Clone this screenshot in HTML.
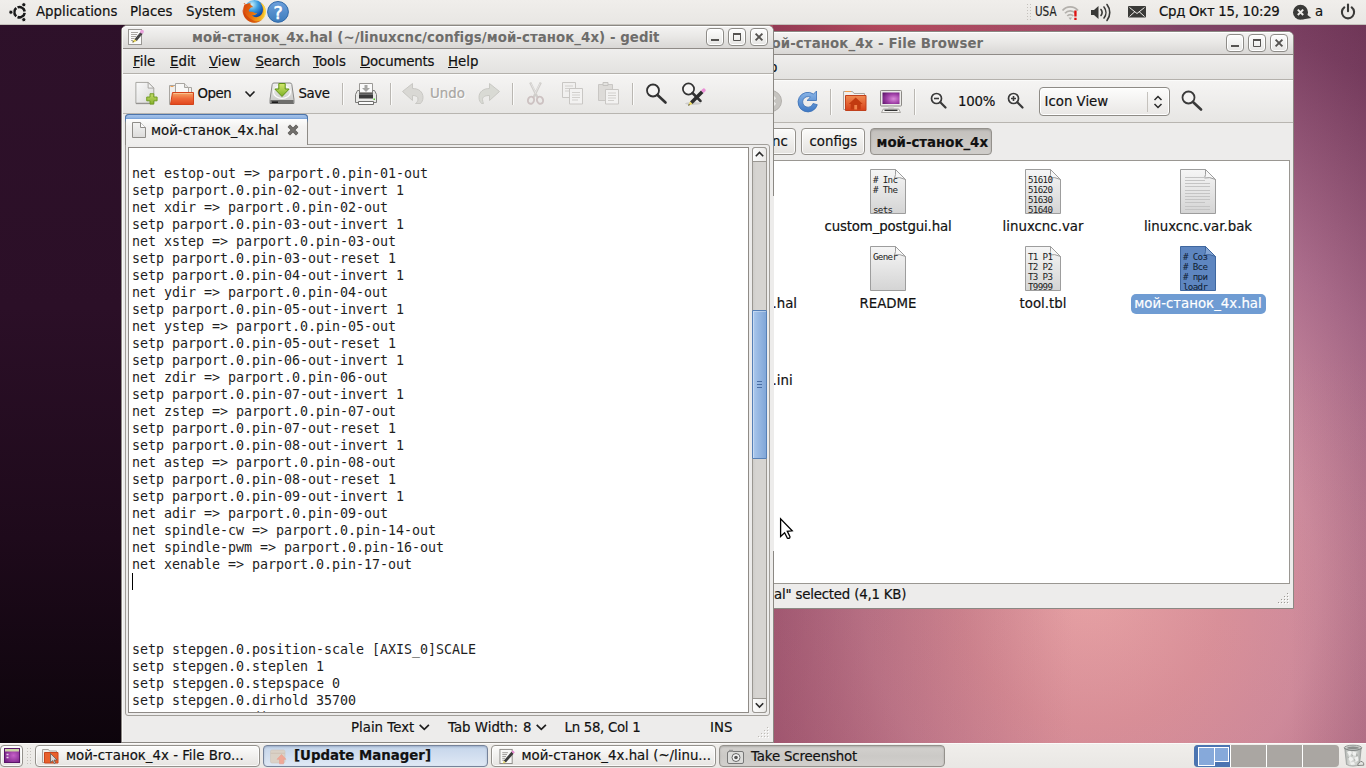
<!DOCTYPE html>
<html><head><meta charset="utf-8"><title>desktop</title>
<style>
*{box-sizing:border-box;margin:0;padding:0}
html,body{width:1366px;height:768px;overflow:hidden}
body{position:relative;font-family:"DejaVu Sans","Liberation Sans",sans-serif;font-size:13.33px;color:#111;background:#7a3b5c;-webkit-text-stroke:.18px currentColor}
.a{position:absolute}
#wall{position:absolute;left:0;top:0;width:1366px;height:768px;
background:
linear-gradient(180deg,#2e112a 0,#2b0f27 40%,#1e0a1b 70%,#0b040a 100%) 0 0/125px 768px no-repeat,
linear-gradient(90deg,rgba(60,15,45,0) 0,rgba(60,15,45,.1) 100%) 1290px 0/76px 768px no-repeat,
linear-gradient(180deg,rgba(205,110,112,0) 45%,rgba(205,110,112,.17) 100%),
linear-gradient(90deg,rgba(110,30,60,.4) 0,rgba(110,30,60,0) 100%) 773px 0/300px 768px no-repeat,
radial-gradient(ellipse 300px 50px at 880px 24px, rgba(205,88,104,1) 0%, rgba(190,80,110,0) 100%),
radial-gradient(ellipse 600px 620px at 1090px 590px,#e9a7aa 0,#da949e 22%,#ce8ea1 38%,#ad6e8d 62%,#7b4062 95%,#6e3455 110%)}
.panel{position:absolute;left:0;width:1366px;background:linear-gradient(#f0eeeb,#e9e7e4)}
#top{top:0;height:25px;border-bottom:1px solid #c4c1bb}
#bot{top:743px;height:25px;border-top:1px solid #fbfaf9}
.t{position:absolute;white-space:nowrap;line-height:16px}
.win{position:absolute;background:#edeceb;border:1px solid #8b8883}
.title{position:absolute;left:0;right:0;top:0;height:24px;background:linear-gradient(#f3f2f1 0,#e9e8e6 45%,#d9d7d5 100%);border-top:1px solid #fff;border-bottom:1px solid #8f8b87;border-radius:5px 5px 0 0}
.title .t{font-weight:bold;color:#6e6d6b}
.wb{position:absolute;width:18px;height:18px;border:1px solid #8e8c88;border-radius:4px;background:linear-gradient(#fefefe,#e6e5e3);box-shadow:inset 0 0 0 1px #fff}
.menubar{position:absolute;left:0;right:0;height:25px;background:linear-gradient(#efeeed,#e3e2e0);border-bottom:1px solid #b4b1ac}
.tb{position:absolute;left:0;right:0;background:linear-gradient(#f5f4f3,#e7e6e4);border-bottom:1px solid #b8b5b0;border-top:1px solid #fbfbfa}
u{text-decoration:underline;text-underline-offset:1px}
.sep{position:absolute;width:2px;border-left:1px solid #bab7b2;border-right:1px solid #fbfbfa}
.dis{color:#a9a7a3;text-shadow:1px 1px 0 #fff}
pre,.ftxt,.title .t{-webkit-text-stroke:0}
pre{font-family:"DejaVu Sans Mono","Liberation Mono",monospace;font-size:13.33px;line-height:17px;color:#1e1e1e}
.task{position:absolute;top:1px;height:22px;border:1px solid #94918c;border-radius:4px;background:linear-gradient(#fcfcfb,#e6e4e1);box-shadow:inset 0 0 0 1px rgba(255,255,255,.8)}
.pb{position:absolute;top:128px;height:27px;border:1px solid #94918c;border-radius:4px;background:linear-gradient(#fbfbfa,#e4e2df);box-shadow:inset 0 0 0 1px rgba(255,255,255,.8)}
.ficon{position:absolute;width:36px;height:45px}
.ftxt{position:absolute;font-family:"DejaVu Sans Mono","Liberation Mono",monospace;font-size:9.200px;letter-spacing:-.68px;line-height:10px;white-space:pre;color:#222;left:3px;top:6px}
.flab{position:absolute;white-space:nowrap;line-height:16px;text-align:center;transform:translateX(-50%)}
</style></head><body>
<div id="wall"></div>

<!-- ================= File browser window ================= -->
<div class="win" id="fb" style="left:690px;top:31px;width:604px;height:578px;border-radius:6px 6px 0 0">
 <div class="title" style="height:23px"><span class="t" style="left:69.500px;top:3px;letter-spacing:.1px">мой-станок_4x - File Browser</span>
  <div class="wb" style="left:535px;top:1px"><svg class="a" style="left:0;top:0" width="16" height="16"><path d="M4 11h8" stroke="#555351" stroke-width="2" fill="none"/></svg></div>
  <div class="wb" style="left:557px;top:1px"><svg class="a" style="left:0;top:0" width="16" height="16"><path d="M4.500 4.500h7v7h-7z" stroke="#555351" stroke-width="1" fill="none"/><path d="M4 5h8" stroke="#555351" stroke-width="2"/></svg></div>
  <div class="wb" style="left:579px;top:1px"><svg class="a" style="left:0;top:0" width="16" height="16"><path d="M4.600 4.600l6.800 6.800M11.400 4.600l-6.800 6.800" stroke="#555351" stroke-width="1.900" fill="none"/></svg></div>
 </div>
 <div class="menubar" style="top:23px;height:25px"><span class="t" style="left:56px;top:5px"><u>H</u>elp</span></div>
 <div class="tb" style="top:48px;height:43px">
  <!-- stop (disabled) -->
  <svg class="a" style="left:68px;top:8px" width="24" height="24" viewBox="0 0 24 24"><circle cx="12" cy="12" r="10.500" fill="#c6c4c0" stroke="#b3b0ac"/><path d="M8 8l8 8M16 8l-8 8" stroke="#ecebe9" stroke-width="3.200"/></svg>
  <!-- reload -->
  <svg class="a" style="left:105px;top:9px" width="24" height="24" viewBox="0 0 24 24"><defs><linearGradient id="rl" x1="0" y1="0" x2="0" y2="1"><stop offset="0" stop-color="#8db7e8"/><stop offset="1" stop-color="#3d78c4"/></linearGradient></defs><path d="M20.500 1v9.500h-9.500l3.400-3.300a5.300 5.300 0 1 0 2.600 6.300l4.300 1.200a9.800 9.800 0 1 1-3.800-10.600z" fill="url(#rl)" stroke="#3a6fb5" stroke-width=".8" stroke-linejoin="round"/></svg>
  <div class="sep" style="left:139px;top:8px;height:26px"></div>
  <!-- home folder -->
  <svg class="a" style="left:151px;top:8px" width="26" height="25" viewBox="0 0 26 25" preserveAspectRatio="none"><defs><linearGradient id="hf" x1="0" y1="0" x2="0" y2="1"><stop offset="0" stop-color="#f08a50"/><stop offset="1" stop-color="#d7401a"/></linearGradient></defs><path d="M1.500 2.500h9l1.500 2h10.500v16h-21z" fill="#f1efec" stroke="#aaa7a2"/><path d="M3 2.500h6" stroke="#f0a050" stroke-width="1"/><path d="M3.500 6.500h20.500v15h-20.500z" fill="url(#hf)" stroke="#c0401c"/><path d="M13.700 8.500l7 6.500h-2v5.500h-10v-5.500h-2z" fill="#c23a10"/><rect x="12.300" y="16" width="2.800" height="4.500" fill="#f0824a"/></svg>
  <!-- computer -->
  <svg class="a" style="left:188px;top:9px" width="24" height="24" viewBox="0 0 24 24"><defs><radialGradient id="cs" cx=".65" cy=".55" r=".8"><stop offset="0" stop-color="#d98ad8"/><stop offset=".5" stop-color="#a040a8"/><stop offset="1" stop-color="#5a1468"/></radialGradient></defs><rect x="1.500" y=".5" width="21" height="15.500" rx=".8" fill="#ecebe9" stroke="#8b8985"/><rect x="3.500" y="2.500" width="17" height="11.500" fill="url(#cs)"/><path d="M9.500 16.500h5l.5 2h-6z" fill="#d4d2cf"/><path d="M2.500 22.500l1.800-3.500h15.400l1.800 3.500z" fill="#f5f4f2" stroke="#9a9894" stroke-width=".8"/><path d="M5.500 20.300h13" stroke="#2a2a2a" stroke-width="1.300"/></svg>
  <div class="sep" style="left:223px;top:8px;height:26px"></div>
  <!-- zoom out -->
  <svg class="a" style="left:239px;top:11px" width="17" height="17" viewBox="0 0 17 17"><circle cx="6.500" cy="6.500" r="5" fill="#f4f3f2" stroke="#3a3a3a" stroke-width="1.700"/><path d="M10.300 10.300l5.200 5.200" stroke="#3a3a3a" stroke-width="2.200" stroke-linecap="round"/><path d="M4 6.500h5" stroke="#3a3a3a" stroke-width="1.600"/></svg>
  <span class="t" style="left:267px;top:13px;letter-spacing:-.2px">100%</span>
  <!-- zoom in -->
  <svg class="a" style="left:316px;top:11px" width="17" height="17" viewBox="0 0 17 17"><circle cx="6.500" cy="6.500" r="5" fill="#f4f3f2" stroke="#3a3a3a" stroke-width="1.700"/><path d="M10.300 10.300l5.200 5.200" stroke="#3a3a3a" stroke-width="2.200" stroke-linecap="round"/><path d="M4 6.500h5M6.500 4v5" stroke="#3a3a3a" stroke-width="1.600"/></svg>
  <!-- combo -->
  <div class="a" style="left:348px;top:6px;width:131px;height:29px;border:1px solid #8e8b86;border-radius:4px;background:linear-gradient(#fdfdfc,#e9e7e5);box-shadow:inset 0 0 0 1px #fff">
   <span class="t" style="left:4.500px;top:6px">Icon View</span>
   <div class="a" style="left:107px;top:4px;width:1px;height:20px;background:#c5c2bd"></div>
   <svg class="a" style="left:111px;top:6px" width="14" height="16" viewBox="0 0 14 16"><path d="M3.500 6l3.500-3.500l3.500 3.500M3.500 10l3.500 3.500l3.500-3.500" fill="none" stroke="#2a2a2a" stroke-width="1.500"/></svg>
  </div>
  <!-- search -->
  <svg class="a" style="left:490px;top:9px" width="22" height="21" viewBox="0 0 22 21"><circle cx="7.500" cy="7.500" r="6" fill="#f4f3f2" stroke="#3a3a3a" stroke-width="1.800"/><path d="M12 12l8 7.500" stroke="#3a3a3a" stroke-width="2.600" stroke-linecap="round"/></svg>
 </div>
 <!-- path bar -->
 <div class="pb" style="left:70px;width:35px;top:96px"><span class="t" style="left:10px;top:5px">nc</span></div>
 <div class="pb" style="left:110px;width:64px;top:96px"><span class="t" style="left:7.500px;top:5px">configs</span></div>
 <div class="pb" style="left:179px;width:122px;top:96px;background:linear-gradient(#c3c0bc,#d0cecb);box-shadow:inset 0 1px 2px rgba(0,0,0,.18)"><span class="t" style="left:5.500px;top:6px;font-weight:bold">мой-станок_4x</span></div>
 <!-- icon view -->
 <div class="a" style="left:60px;top:128px;width:539px;height:424px;background:#fff;border:1px solid #9a9792;overflow:hidden">
<svg width="0" height="0" class="a"><defs><linearGradient id="fi" x1="0" y1="0" x2="0" y2="1"><stop offset="0" stop-color="#f6f6f6"/><stop offset="1" stop-color="#d4d4d4"/></linearGradient></defs></svg><div class="ficon" style="left:118px;top:8px"><svg class="a" style="left:0;top:0" width="36" height="45" viewBox="0 0 36 45"><path d="M.5.500h25l10 10v34h-35z" fill="url(#fi)" stroke="#9d9d9d"/><path d="M25.500.5q.5 6-1 8.500q5-1.500 11 1.500z" fill="#f7f7f7" stroke="#9d9d9d" stroke-linejoin="round"/></svg><div class="ftxt" style="color:#222"># Inc
# The

sets</div></div><span class="flab" style="left:136px;top:58px;letter-spacing:-.15px">custom_postgui.hal</span><div class="ficon" style="left:273px;top:8px"><svg class="a" style="left:0;top:0" width="36" height="45" viewBox="0 0 36 45"><path d="M.5.500h25l10 10v34h-35z" fill="url(#fi)" stroke="#9d9d9d"/><path d="M25.500.5q.5 6-1 8.500q5-1.500 11 1.500z" fill="#f7f7f7" stroke="#9d9d9d" stroke-linejoin="round"/></svg><div class="ftxt" style="color:#222">51610
51620
51630
51640</div></div><span class="flab" style="left:291px;top:58px">linuxcnc.var</span><div class="ficon" style="left:428px;top:8px"><svg class="a" style="left:0;top:0" width="36" height="45" viewBox="0 0 36 45"><path d="M.5.500h25l10 10v34h-35z" fill="url(#fi)" stroke="#9d9d9d"/><path d="M25.500.5q.5 6-1 8.500q5-1.500 11 1.500z" fill="#f7f7f7" stroke="#9d9d9d" stroke-linejoin="round"/><g stroke="#c4c4c4" stroke-width="1"><path d="M5 8.5h20"/><path d="M5 11.5h20"/><path d="M5 14.5h25"/><path d="M5 17.5h25"/><path d="M5 21.5h25"/><path d="M5 24.5h25"/><path d="M5 27.5h25"/><path d="M5 30.5h25"/><path d="M5 33.5h20"/><path d="M5 37.5h25"/><path d="M5 40.5h25"/></g></svg></div><span class="flab" style="left:446px;top:58px">linuxcnc.var.bak</span><div class="ficon" style="left:118px;top:85px"><svg class="a" style="left:0;top:0" width="36" height="45" viewBox="0 0 36 45"><path d="M.5.500h25l10 10v34h-35z" fill="url(#fi)" stroke="#9d9d9d"/><path d="M25.500.5q.5 6-1 8.500q5-1.500 11 1.500z" fill="#f7f7f7" stroke="#9d9d9d" stroke-linejoin="round"/></svg><div class="ftxt" style="color:#222">Gener</div></div><span class="flab" style="left:136px;top:135px">README</span><div class="ficon" style="left:273px;top:85px"><svg class="a" style="left:0;top:0" width="36" height="45" viewBox="0 0 36 45"><path d="M.5.500h25l10 10v34h-35z" fill="url(#fi)" stroke="#9d9d9d"/><path d="M25.500.5q.5 6-1 8.500q5-1.500 11 1.500z" fill="#f7f7f7" stroke="#9d9d9d" stroke-linejoin="round"/></svg><div class="ftxt" style="color:#222">T1 P1
T2 P2
T3 P3
T9999</div></div><span class="flab" style="left:291px;top:135px">tool.tbl</span><div class="ficon" style="left:428px;top:85px"><svg class="a" style="left:0;top:0" width="36" height="45" viewBox="0 0 36 45"><path d="M.5.500h25l10 10v34h-35z" fill="#5e86c0" stroke="#3f679f"/><path d="M25.500.5q.5 6-1 8.500q5-1.500 11 1.500z" fill="#86a6d4" stroke="#3f679f" stroke-linejoin="round"/></svg><div class="ftxt" style="color:#0f1d33"># Соз
# Все
# при
loadr</div></div><div class="a" style="left:379px;top:133px;width:135px;height:20px;border-radius:5px;background:#6f9cd3"></div><span class="flab" style="left:446px;top:135px;color:#fff">мой-станок_4x.hal</span><span class="t" style="left:20.500px;top:135px">.hal</span><span class="t" style="left:20.500px;top:212px">.ini</span>
 </div>
 <!-- status -->
 <span class="t" style="left:83px;top:555px;letter-spacing:-.2px">al" selected (4,1 KB)</span>
 <svg class="a" style="left:586px;top:560px" width="12" height="12"><g fill="#9d9a95"><rect x="10" y="1" width="1" height="1"/><rect x="7" y="4" width="1" height="1"/><rect x="10" y="4" width="1" height="1"/><rect x="4" y="7" width="1" height="1"/><rect x="7" y="7" width="1" height="1"/><rect x="10" y="7" width="1" height="1"/><rect x="1" y="10" width="1" height="1"/><rect x="4" y="10" width="1" height="1"/><rect x="7" y="10" width="1" height="1"/><rect x="10" y="10" width="1" height="1"/></g><g fill="#fff"><rect x="11" y="2" width="1" height="1"/><rect x="8" y="5" width="1" height="1"/><rect x="11" y="5" width="1" height="1"/><rect x="5" y="8" width="1" height="1"/><rect x="8" y="8" width="1" height="1"/><rect x="11" y="8" width="1" height="1"/><rect x="2" y="11" width="1" height="1"/><rect x="5" y="11" width="1" height="1"/><rect x="8" y="11" width="1" height="1"/><rect x="11" y="11" width="1" height="1"/></g></svg>
</div>

<!-- ================= gedit window ================= -->
<div class="win" id="ge" style="left:121px;top:25px;width:653px;height:718px;border-radius:6px 6px 0 0">
 <div class="title" style="height:23px">
  <svg class="a" style="left:6px;top:2px" width="16" height="16" viewBox="0 0 16 16"><rect x=".5" y=".5" width="13" height="15" fill="#fafafa" stroke="#999793"/><path d="M3 3.500h7M3 5.500h6M3 7.500h5M3 9.500h3.500M3 11.500h2" stroke="#a9a7a3" stroke-width="1"/><g transform="translate(-.3 -1.600)"><path d="M6.800 11.800l6-7.200l2.200 1.800l-6 7.200z" fill="#3a3a3a"/><path d="M7.700 10.900l2.100 1.800M8.900 9.400l2.100 1.800M10.100 8l2.100 1.800M11.300 6.600l2.100 1.800" stroke="#777" stroke-width=".5"/><circle cx="14.300" cy="4.300" r="1.900" fill="#e9a3dc"/><path d="M6.800 11.800l2.200 1.800l-2.600 1.200l-1.500 .200l.3-1.300z" fill="#e3d257"/><path d="M4.800 15.100l.4-1.400l1.100 .9z" fill="#111"/></g></svg>
  <span class="t" style="left:70px;top:3px;letter-spacing:.06px">мой-станок_4x.hal (~/linuxcnc/configs/мой-станок_4x) - gedit</span>
  <div class="wb" style="left:584px;top:1px"><svg class="a" style="left:0;top:0" width="16" height="16"><path d="M4 11h8" stroke="#555351" stroke-width="2" fill="none"/></svg></div>
  <div class="wb" style="left:606px;top:1px"><svg class="a" style="left:0;top:0" width="16" height="16"><path d="M4.500 4.500h7v7h-7z" stroke="#555351" stroke-width="1" fill="none"/><path d="M4 5h8" stroke="#555351" stroke-width="2"/></svg></div>
  <div class="wb" style="left:628px;top:1px"><svg class="a" style="left:0;top:0" width="16" height="16"><path d="M4.600 4.600l6.800 6.800M11.400 4.600l-6.800 6.800" stroke="#555351" stroke-width="1.900" fill="none"/></svg></div>
 </div>
 <div class="menubar" style="top:23px">
  <span class="t" style="left:11px;top:5px"><u>F</u>ile</span>
  <span class="t" style="left:48px;top:5px"><u>E</u>dit</span>
  <span class="t" style="left:87px;top:5px"><u>V</u>iew</span>
  <span class="t" style="left:133.500px;top:5px;letter-spacing:-.2px"><u>S</u>earch</span>
  <span class="t" style="left:191px;top:5px"><u>T</u>ools</span>
  <span class="t" style="left:238px;top:5px;letter-spacing:-.2px"><u>D</u>ocuments</span>
  <span class="t" style="left:326px;top:5px"><u>H</u>elp</span>
 </div>
 <div class="tb" id="gtb" style="top:48px;height:40px">
  <!-- new -->
  <svg class="a" style="left:12px;top:6px" width="24.500" height="23.600" preserveAspectRatio="none" viewBox="0 0 26 25"><defs><linearGradient id="pg" x1="0" y1="0" x2="1" y2="1"><stop offset="0" stop-color="#fafafa"/><stop offset="1" stop-color="#d9d9d8"/></linearGradient><linearGradient id="gp" x1="0" y1="0" x2="0" y2="1"><stop offset="0" stop-color="#c3dc6a"/><stop offset="1" stop-color="#86b02a"/></linearGradient></defs><path d="M2 1.500h13l6 6v16h-19z" fill="url(#pg)" stroke="#a3a19d"/><path d="M15 1.500v6h6z" fill="#f4f4f3" stroke="#a3a19d" stroke-linejoin="round"/><path d="M2 24h19" stroke="#8c8a86" stroke-width="1"/><path d="M17 13.500h4v3.500h3.500v4h-3.500v3.500h-4v-3.500h-3.500v-4h3.500z" fill="url(#gp)" stroke="#6d9a1e" stroke-width="1"/></svg>
  <!-- open -->
  <svg class="a" style="left:46px;top:7px" width="27" height="24" viewBox="0 0 27 24"><defs><linearGradient id="of" x1="0" y1="0" x2="0" y2="1"><stop offset="0" stop-color="#f6a868"/><stop offset=".5" stop-color="#ee6a3a"/><stop offset="1" stop-color="#e2451c"/></linearGradient></defs><path d="M1.500 3.500h6v19h-6z" fill="#efeeec" stroke="#a9a6a1"/><path d="M2.500 4.500h3" stroke="#f0a050"/><path d="M7.500 1.500h9l4 4v15h-13z" fill="#f8f8f7" stroke="#a9a6a1"/><path d="M16.500 1.500v4h4" fill="#e6e5e3" stroke="#a9a6a1"/><path d="M20.500 5.500h3v12h-3z" fill="#f2f1ef" stroke="#a9a6a1"/><path d="M4.500 10.500h21v12h-23z" fill="url(#of)" stroke="#d3431a"/><path d="M5.500 11.500h19" stroke="#f9c89a" stroke-width="1" opacity=".8"/></svg>
  <span class="t" style="left:75.500px;top:11px;letter-spacing:-.5px">Open</span>
  <svg class="a" style="left:121px;top:14px" width="14" height="10"><path d="M2.500 2.500l4.500 4.500l4.500-4.500" fill="none" stroke="#1e1e1e" stroke-width="1.600"/></svg>
  <!-- save -->
  <svg class="a" style="left:147px;top:6px" width="26" height="25" viewBox="0 0 26 25"><defs><linearGradient id="hd" x1="0" y1="0" x2="0" y2="1"><stop offset="0" stop-color="#f2f2f1"/><stop offset="1" stop-color="#c4c4c2"/></linearGradient><linearGradient id="ga" x1="0" y1="0" x2="0" y2="1"><stop offset="0" stop-color="#d5e86e"/><stop offset="1" stop-color="#7cb024"/></linearGradient></defs><path d="M3.200 3.500q.2-1.500 1.800-1.500h16q1.600 0 1.800 1.500l2.200 15v4h-24v-4z" fill="url(#hd)" stroke="#8a8a88"/><ellipse cx="13" cy="11" rx="8.500" ry="6.500" fill="none" stroke="#fff" stroke-width="1.200" opacity=".9"/><path d="M1.500 19h23v4h-23z" fill="#6e6e6c"/><path d="M3 21.200h6" stroke="#1c1c1c" stroke-width="1.600"/><path d="M9.800 2.500h6.400v5.500h4l-7.200 7.500l-7.200-7.500h4z" fill="url(#ga)" stroke="#5f9016" stroke-linejoin="round"/></svg>
  <span class="t" style="left:176.500px;top:11px;letter-spacing:-.4px">Save</span>
  <div class="sep" style="left:220px;top:8px;height:22px"></div>
  <!-- print -->
  <svg class="a" style="left:232px;top:7px" width="24" height="24" viewBox="0 0 24 24"><path d="M5.500 1.500h13v9h-13z" fill="#fafafa" stroke="#9b9996"/><path d="M10.500 3h3v3h2.500l-4 4l-4-4h2.500z" fill="#a5a5a3"/><path d="M3.500 8.500h2v3h13v-3h2l2 4v8h-21v-8z" fill="#e9e9e7" stroke="#7c7c7a"/><rect x="5" y="11.500" width="14" height="5" fill="#3a3a3a"/><path d="M5 12.500h14" stroke="#6a6a6a"/><path d="M4.500 19.500h15v3h-15z" fill="#fbfbfb" stroke="#6f6f6d"/><rect x="19.500" y="16.500" width="1.500" height="1.500" fill="#4fd02a"/></svg>
  <div class="sep" style="left:268px;top:8px;height:22px"></div>
  <!-- undo -->
  <svg class="a" style="left:279px;top:7px" width="24" height="24" viewBox="0 0 24 24"><path d="M1.500 9.500l10-8v5c6 0 10.500 3 10.500 9c0 3-1.500 5-2.500 6h-5c1.500-1 2.500-2.500 2.500-4.500c0-2.500-2-3.500-5.500-3.500v5z" fill="#d9d8d4" stroke="#c9c8c4" stroke-linejoin="round"/></svg>
  <span class="t dis" style="left:308px;top:11px">Undo</span>
  <!-- redo -->
  <svg class="a" style="left:355px;top:7px" width="24" height="24" viewBox="0 0 24 24"><path d="M22.500 9.500l-10-8v5c-6 0-10.500 3-10.500 9c0 3 1.500 5 2.500 6h2c-.5-1-1-2.500-1-4c0-3 3-4 7-4v5z" fill="#d9dad4" stroke="#c9c9c4" stroke-linejoin="round"/></svg>
  <div class="sep" style="left:390px;top:8px;height:22px"></div>
  <!-- cut -->
  <svg class="a" style="left:404px;top:7px" width="20" height="23" viewBox="0 0 20 23"><path d="M4.200 .5l7.300 15M14.800 .5l-7.300 15" stroke="#d0cecb" stroke-width="2.300" fill="none"/><path d="M5 1.500l5 10M14 1.500l-5 10" stroke="#e6e5e3" stroke-width=".8" fill="none"/><ellipse cx="5" cy="18.200" rx="3" ry="3.600" fill="none" stroke="#cdc2c2" stroke-width="1.900" transform="rotate(20 5 18.200)"/><ellipse cx="14" cy="18.200" rx="3" ry="3.600" fill="none" stroke="#cdc2c2" stroke-width="1.900" transform="rotate(-20 14 18.200)"/></svg>
  <!-- copy -->
  <svg class="a" style="left:440px;top:7px" width="22" height="23" viewBox="0 0 22 23"><path d="M.5.500h13v15h-13z" fill="#f1f0ef" stroke="#c9c7c4"/><path d="M3 4h8M3 6.500h8M3 9h4" stroke="#d2d0cd"/><path d="M7.500 6.500h13v15.500h-13z" fill="#f3f2f1" stroke="#c9c7c4"/><path d="M10 10.500h8M10 13h8M10 15.500h8M10 18h6" stroke="#d2d0cd"/></svg>
  <!-- paste -->
  <svg class="a" style="left:476px;top:7px" width="22" height="23" viewBox="0 0 22 23"><path d="M.5 2.500h14v16h-14z" fill="#dddbd8" stroke="#c9c7c4"/><path d="M5 .5h5v3h-5z" fill="#e3e2df" stroke="#c4c2bf"/><path d="M7.500 7.500h13v14.500h-13z" fill="#f3f2f1" stroke="#c9c7c4"/><path d="M10 11h8M10 13.500h8M10 16h8M10 18.500h6" stroke="#d2d0cd"/></svg>
  <div class="sep" style="left:510px;top:8px;height:22px"></div>
  <!-- search -->
  <svg class="a" style="left:523px;top:8px" width="23" height="22" viewBox="0 0 23 22"><circle cx="8" cy="7.500" r="6" fill="#f6f5f4" stroke="#333" stroke-width="1.800"/><path d="M12.500 12l8 7.500" stroke="#333" stroke-width="2.600" stroke-linecap="round"/></svg>
  <!-- replace -->
  <svg class="a" style="left:559px;top:7px" width="25" height="24" viewBox="0 0 25 24"><ellipse cx="12" cy="21.500" rx="8" ry="1.500" fill="#000" opacity=".12"/><circle cx="7.500" cy="7" r="5.600" fill="#f6f5f4" stroke="#333" stroke-width="1.700"/><path d="M11.500 11l8 8" stroke="#333" stroke-width="2.500" stroke-linecap="round"/><path d="M9 19.500l11-11l2.500 2.500l-11 11z" fill="#2e2e2e"/><path d="M20 8.500l1.600-1.600a1.700 1.700 0 0 1 2.500 2.500l-1.600 1.600z" fill="#ea8fd6"/><path d="M9 19.500l-1.800 4.200l4.300-1.700z" fill="#ecd95e"/><path d="M7.200 23.700l.7-1.600l1 .9z" fill="#111"/></svg>
 </div>
 <!-- notebook -->
 <div class="a" style="left:3px;top:118px;width:645px;height:572px;border:1px solid #a19e99;border-radius:0 3px 3px 3px"></div>
 <div class="a" id="tab" style="left:3px;top:88px;width:183px;height:31px;border:1px solid #8e8b86;border-bottom:none;border-radius:4px 4px 0 0;background:linear-gradient(#fdfdfd 4px,#f3f2f1 12px,#efeeed 100%)">
  <div class="a" style="left:-1px;top:-1px;width:183px;height:5px;border-radius:4px 4px 0 0;background:linear-gradient(#a6c3e9,#8fb3e2 70%,#6f9ad3);border:1px solid #4c75ac;border-bottom:none"></div>
  <div class="a" style="left:-1px;top:4px;width:1px;height:4px;background:linear-gradient(#4c75ac,#8e8b86)"></div>
  <div class="a" style="left:181px;top:4px;width:1px;height:4px;background:linear-gradient(#4c75ac,#8e8b86)"></div>
  <svg class="a" style="left:6px;top:7px" width="14" height="16" viewBox="0 0 14 16"><defs><linearGradient id="tdg" x1="0" y1="0" x2="0" y2="1"><stop offset="0" stop-color="#f4f4f3"/><stop offset="1" stop-color="#dddcdb"/></linearGradient></defs><path d="M.5.500h8l5 5v10h-13z" fill="url(#tdg)" stroke="#8f8d89"/><path d="M8.500.5v5h5" fill="#fcfcfc" stroke="#8f8d89"/></svg>
  <span class="t" style="left:25px;top:8px">мой-станок_4x.hal</span>
  <svg class="a" style="left:160px;top:8px" width="14" height="14" viewBox="0 0 14 14"><path d="M2.800 2.800l8.400 8.400M11.200 2.800l-8.400 8.400" stroke="#5a5855" stroke-width="3.400"/><path d="M2.800 2.800l8.400 8.400M11.200 2.800l-8.400 8.400" stroke="#73716e" stroke-width="2"/></svg>
 </div>
 <!-- text view -->
 <div class="a" id="tv" style="left:6px;top:121px;width:621px;height:566px;border:1px solid #8f8b87;background:#fff;overflow:hidden">
<pre class="a" style="left:3px;top:0;letter-spacing:-.0254px">

net estop-out => parport.0.pin-01-out
setp parport.0.pin-02-out-invert 1
net xdir => parport.0.pin-02-out
setp parport.0.pin-03-out-invert 1
net xstep => parport.0.pin-03-out
setp parport.0.pin-03-out-reset 1
setp parport.0.pin-04-out-invert 1
net ydir => parport.0.pin-04-out
setp parport.0.pin-05-out-invert 1
net ystep => parport.0.pin-05-out
setp parport.0.pin-05-out-reset 1
setp parport.0.pin-06-out-invert 1
net zdir => parport.0.pin-06-out
setp parport.0.pin-07-out-invert 1
net zstep => parport.0.pin-07-out
setp parport.0.pin-07-out-reset 1
setp parport.0.pin-08-out-invert 1
net astep => parport.0.pin-08-out
setp parport.0.pin-08-out-reset 1
setp parport.0.pin-09-out-invert 1
net adir => parport.0.pin-09-out
net spindle-cw => parport.0.pin-14-out
net spindle-pwm => parport.0.pin-16-out
net xenable => parport.0.pin-17-out




setp stepgen.0.position-scale [AXIS_0]SCALE
setp stepgen.0.steplen 1
setp stepgen.0.stepspace 0
setp stepgen.0.dirhold 35700
<span style="color:#444">setp stepgen.0.dirsetup</span>
</pre>
  <div class="a" style="left:3px;top:425px;width:1px;height:17px;background:#000"></div>
 </div>
 <!-- scrollbar -->
 <div class="a" id="sb" style="left:630px;top:121px;width:15px;height:566px;border:1px solid #9a9792;border-radius:3px;background:linear-gradient(90deg,#cfcdca,#d6d4d1 3px,#d6d4d1)">
  <div class="a" style="left:-1px;top:-1px;width:15px;height:15px;border:1px solid #9a9792;border-radius:3px 3px 0 0;background:linear-gradient(90deg,#fdfdfd,#ebeae8)"><svg class="a" style="left:0;top:0" width="13" height="13"><path d="M2.800 8.200l3.700-3.700l3.700 3.700" fill="none" stroke="#2a2a2a" stroke-width="1.600"/></svg></div>
  <div class="a" style="left:-1px;top:162px;width:15px;height:149px;border:1px solid #5680b6;border-radius:1px;background:linear-gradient(90deg,#abc8ec,#98b9e3 40%,#82a7d8);box-shadow:inset 1px 1px 0 rgba(255,255,255,.35)"><svg class="a" style="left:3px;top:69px" width="8" height="9"><path d="M1 1.500h5M1 4.500h5M1 7.500h5" stroke="#4a6fa5" stroke-width="1"/></svg></div>
  <div class="a" style="left:-1px;top:550px;width:15px;height:15px;border:1px solid #9a9792;border-radius:0 0 3px 3px;background:linear-gradient(90deg,#fdfdfd,#ebeae8)"><svg class="a" style="left:0;top:0" width="13" height="13"><path d="M2.800 4.300l3.700 3.700l3.700-3.700" fill="none" stroke="#2a2a2a" stroke-width="1.600"/></svg></div>
 </div>
 <!-- status bar -->
 <span class="t" style="left:229px;top:694px">Plain Text</span>
 <svg class="a" style="left:296px;top:696px" width="12" height="10"><path d="M1.700 2.800l4.600 4.600l4.600-4.600" fill="none" stroke="#1e1e1e" stroke-width="1.700"/></svg>
 <span class="t" style="left:326px;top:694px">Tab Width:</span><span class="t" style="left:401px;top:694px">8</span>
 <svg class="a" style="left:412.500px;top:696px" width="12" height="10"><path d="M1.700 2.800l4.600 4.600l4.600-4.600" fill="none" stroke="#1e1e1e" stroke-width="1.700"/></svg>
 <span class="t" style="left:442.500px;top:694px;letter-spacing:-.3px">Ln 58, Col 1</span>
 <span class="t" style="left:588px;top:694px">INS</span>
 <svg class="a" style="left:635px;top:700px" width="12" height="12"><g fill="#bdbab5"><rect x="10" y="1" width="1" height="1"/><rect x="7" y="4" width="1" height="1"/><rect x="10" y="4" width="1" height="1"/><rect x="4" y="7" width="1" height="1"/><rect x="7" y="7" width="1" height="1"/><rect x="10" y="7" width="1" height="1"/><rect x="1" y="10" width="1" height="1"/><rect x="4" y="10" width="1" height="1"/><rect x="7" y="10" width="1" height="1"/><rect x="10" y="10" width="1" height="1"/></g><g fill="#fff"><rect x="11" y="2" width="1" height="1"/><rect x="8" y="5" width="1" height="1"/><rect x="11" y="5" width="1" height="1"/><rect x="5" y="8" width="1" height="1"/><rect x="8" y="8" width="1" height="1"/><rect x="11" y="8" width="1" height="1"/><rect x="2" y="11" width="1" height="1"/><rect x="5" y="11" width="1" height="1"/><rect x="8" y="11" width="1" height="1"/><rect x="11" y="11" width="1" height="1"/></g></svg>
 <div class="a" style="left:0;top:2px;width:1px;height:714px;background:#f9f8f7"></div>
</div>
<!-- missing border artefact -->
<div class="a" style="left:773px;top:196px;width:1px;height:355px;background:#edeceb"></div>
<svg class="a" style="left:778px;top:516px" width="18" height="26" viewBox="-2 -2 18 26"><path d="M.6.800v17.600l4-3.700l2.600 5.200q1.200 1 2.600-.2q.5-.8-.2-1.800l-2.300-4.600l4.900-.5z" fill="#fff" stroke="#000" stroke-width="1.300" stroke-linejoin="miter"/></svg>

<!-- ================= top panel ================= -->
<div class="panel" id="top">

 <!-- ubuntu logo -->
 <svg class="a" style="left:9px;top:2px" width="22" height="20" viewBox="0 0 22 20"><g fill="none" stroke="#1a1a1a" stroke-width="2.600"><path d="M7.30 14.30A5.2 5.2 0 0 1 7.30 6.10"/><path d="M8.55 5.38A5.2 5.2 0 0 1 15.65 9.48"/><path d="M15.65 10.92A5.2 5.2 0 0 1 8.55 15.02"/></g><circle cx="1.90" cy="10.20" r="2.1" fill="#1a1a1a" stroke="#eeece9" stroke-width=".9"/><circle cx="14.80" cy="2.75" r="2.1" fill="#1a1a1a" stroke="#eeece9" stroke-width=".9"/><circle cx="14.80" cy="17.65" r="2.1" fill="#1a1a1a" stroke="#eeece9" stroke-width=".9"/></svg>
 <!-- firefox -->
 <svg class="a" style="left:241px;top:0" width="25" height="25" viewBox="0 0 24 24"><defs><radialGradient id="fg" cx=".38" cy=".22" r=".85"><stop offset="0" stop-color="#c4eefb"/><stop offset=".35" stop-color="#3fa0e0"/><stop offset=".75" stop-color="#0d4aa8"/><stop offset="1" stop-color="#06226a"/></radialGradient><linearGradient id="ff" x1="0" y1=".3" x2="1" y2=".6"><stop offset="0" stop-color="#d9480c"/><stop offset=".45" stop-color="#e8700c"/><stop offset=".8" stop-color="#f4a41a"/><stop offset="1" stop-color="#f9d43a"/></linearGradient></defs><circle cx="12.800" cy="9.800" r="9.700" fill="url(#fg)"/><path d="M2.200 3.200c1.200.9 2.600.9 3.800.7c1-.9 2.200-.5 3-1.300c-.3 1.300.2 2 1 2.700c.8.500 1.400 1 1.300 1.600c-1.300-.2-2.200.2-2.500 1.100c-.3.900-1.300 1.200-1.300 2.100c0 1 1 1.500 2 1.200c1-.3 2.400 0 3 .7c.8.900 2 .8 3 .3c-.7 1.800-3 3-5.200 2.200c1.600 2.200 5.200 2.700 7.800.9c2.700-1.900 3.400-5.300 2.700-8.300c-.4-1.900-1.200-3.400-2.300-4.800c3.600 1.600 5.500 5.300 5.300 9.100c-.3 6-5.200 10.400-10.800 10.400c-6.200 0-11-4.900-11-11c0-2.800.6-5.500 2.200-7.600z" fill="url(#ff)"/><path d="M18.500 2.300c3.600 1.600 5.500 5.300 5.300 9.100c-.1 2.500-1 4.700-2.500 6.400c1.200-2.600 1.500-5.500.8-8.500c-.6-2.600-1.800-5-3.600-7z" fill="#fbe04a" opacity=".8"/><path d="M1.200 9c0 6 4.800 12 11 12.800c3 .3 5.800-.7 8-2.500c-2.500 1.200-5.500 1.500-8.300.3c-5-2-8.500-6-10.700-10.600z" fill="#c8360a" opacity=".55"/></svg>
 <!-- help -->
 <svg class="a" style="left:266px;top:0" width="24" height="24" viewBox="0 0 24 24"><defs><linearGradient id="hg" x1="0" y1="0" x2="0" y2="1"><stop offset="0" stop-color="#6da0dc"/><stop offset="1" stop-color="#3d7cbc"/></linearGradient></defs><circle cx="12" cy="11.900" r="10.400" fill="url(#hg)" stroke="#2f68a8" stroke-width="1"/><text x="12.200" y="18.800" font-family="DejaVu Sans,Liberation Sans,sans-serif" font-size="17.500" fill="#fff" stroke="#fff" stroke-width=".6" text-anchor="middle">?</text></svg>
 <!-- handle -->
 <svg class="a" style="left:1027px;top:3px" width="6" height="18"><g fill="#c4c1bc"><rect x="0" y="1" width="1" height="1"/><rect x="3" y="1" width="1" height="1"/><rect x="0" y="4" width="1" height="1"/><rect x="3" y="4" width="1" height="1"/><rect x="0" y="7" width="1" height="1"/><rect x="3" y="7" width="1" height="1"/><rect x="0" y="10" width="1" height="1"/><rect x="3" y="10" width="1" height="1"/><rect x="0" y="13" width="1" height="1"/><rect x="3" y="13" width="1" height="1"/><rect x="0" y="16" width="1" height="1"/><rect x="3" y="16" width="1" height="1"/></g></svg>
 <span class="t" style="left:1035px;top:4px;transform:scaleX(.78);transform-origin:0 0;color:#222">USA</span>
 <!-- wifi -->
 <svg class="a" style="left:1061px;top:4px" width="19" height="17" viewBox="0 0 19 17"><g fill="none" stroke="#b3b0ac" stroke-width="1.700"><path d="M1.500 6.500a10 10 0 0 1 15.500 0"/><path d="M4 9.300a6.800 6.800 0 0 1 10.500 0"/><path d="M6.300 12a3.800 3.800 0 0 1 6 0"/></g><path d="M7.500 13.500h3.600l-1.800 2.500z" fill="#b3b0ac"/><path d="M13.300 6.500h2.300v6h-2.300z M13.300 13.800h2.300v2.200h-2.300z" fill="#e01010"/></svg>
 <!-- volume -->
 <svg class="a" style="left:1090px;top:3px" width="22" height="19" viewBox="0 0 22 19"><path d="M1 7h3l4.500-4v13l-4.500-4h-3z" fill="#3a3a38"/><g fill="none" stroke="#3a3a38" stroke-width="1.600" stroke-linecap="round"><path d="M11 6.500a5 5 0 0 1 0 6"/><path d="M14 4a9 9 0 0 1 0 11"/><path d="M17 1.500a13 13 0 0 1 0 16"/></g></svg>
 <!-- mail -->
 <svg class="a" style="left:1128px;top:6px" width="18" height="12" viewBox="0 0 18 12"><rect x="0" y="0" width="18" height="11.500" rx="1" fill="#3a3a38"/><path d="M1.500 1.500l7.500 6l7.500-6M1.500 10.500l5.500-5M16.500 10.500l-5.500-5" stroke="#efedea" stroke-width="1" fill="none"/></svg>
 <!-- chat status -->
 <svg class="a" style="left:1292px;top:4px" width="20" height="17" viewBox="0 0 20 17"><circle cx="8.500" cy="8.300" r="7.500" fill="#3a3a38"/><path d="M13.500 9.500l5.800 4.600l-9 1.500z" fill="#3a3a38"/><path d="M5.800 5.600l5.400 5.400M11.200 5.600l-5.400 5.400" stroke="#efedea" stroke-width="2" /></svg>
 <!-- power -->
 <svg class="a" style="left:1339px;top:3px" width="18" height="18" viewBox="0 0 18 18"><path d="M5.300 4.400a6.100 6.100 0 1 0 7.400 0" fill="none" stroke="#3a3a38" stroke-width="2.100" stroke-linecap="round"/><path d="M9 1.600v6.600" stroke="#3a3a38" stroke-width="2.100" stroke-linecap="round"/></svg>
 <span class="t" style="left:36px;top:4px">Applications</span>
 <span class="t" style="left:130px;top:4px">Places</span>
 <span class="t" style="left:186px;top:4px">System</span>
 <span class="t" style="left:1159px;top:4px;letter-spacing:-.3px">Срд Окт 15, 10:29</span>
 <span class="t" style="left:1315px;top:4px">a</span>
</div>
<!-- ================= bottom panel ================= -->
<div class="panel" id="bot">
 <!-- show desktop -->
 <div class="task" style="left:0;width:23px"><svg class="a" style="left:3px;top:2px" width="16" height="15" viewBox="0 0 16 15"><defs><radialGradient id="sd" cx=".6" cy=".5" r=".7"><stop offset="0" stop-color="#c660c8"/><stop offset="1" stop-color="#6f1c80"/></radialGradient></defs><rect x=".5" y=".5" width="15" height="14" fill="url(#sd)" stroke="#5a1668"/><rect x="1" y="1" width="14" height="2.500" fill="#c9d3a4"/><path d="M2.500 6.500h2M2.500 9.500h2" stroke="#e8d7ea" stroke-width="1.400"/></svg></div>
 <svg class="a" style="left:27px;top:3px" width="6" height="18"><g fill="#c4c1bc"><rect x="0" y="1" width="1" height="1"/><rect x="3" y="1" width="1" height="1"/><rect x="0" y="4" width="1" height="1"/><rect x="3" y="4" width="1" height="1"/><rect x="0" y="7" width="1" height="1"/><rect x="3" y="7" width="1" height="1"/><rect x="0" y="10" width="1" height="1"/><rect x="3" y="10" width="1" height="1"/><rect x="0" y="13" width="1" height="1"/><rect x="3" y="13" width="1" height="1"/><rect x="0" y="16" width="1" height="1"/><rect x="3" y="16" width="1" height="1"/></g></svg>
 <div class="task" style="left:35px;width:225px">
  <svg class="a" style="left:6px;top:2px" width="17" height="16" viewBox="0 0 17 16"><path d="M.5 1.500h6l1 1.500h7v11.500h-14z" fill="#eeece9" stroke="#a7a49f"/><path d="M2.500 4.500h13.500v10.500h-13.500z" fill="#e8602c" stroke="#c8451c"/><path d="M8.500 5.500v9l2.200-2l1.500 3l1.300-.6l-1.500-2.900h3z" fill="#d8d8d8" stroke="#555" stroke-width=".7"/></svg>
  <span class="t" style="left:30px;top:2px">мой-станок_4x - File Bro...</span></div>
 <div class="task" style="left:263px;width:225px;background:linear-gradient(#c5d5ea,#dfe8f4);border-color:#76839a;box-shadow:inset 0 1px 2px rgba(60,80,120,.3)">
  <svg class="a" style="left:6px;top:3px" width="18" height="16" viewBox="0 0 18 16"><rect x=".5" y="1" width="14.500" height="13" rx="1.500" fill="#dad1c6" stroke="#cfc5ba" stroke-width=".6"/><path d="M.8 4.300h14" stroke="#cbbfb2" stroke-width=".8"/><path d="M11.500 5.500l4.500 4.800h-2.500v4.500h-4v-4.500h-2.500z" fill="#f0a896" stroke="#e8988a" stroke-width=".5"/></svg>
  <span class="t" style="left:30px;top:2px;font-weight:bold">[Update Manager]</span></div>
 <div class="task" style="left:491px;width:225px">
  <svg class="a" style="left:7px;top:2px" width="16" height="16" viewBox="0 0 16 17"><rect x=".5" y="1.500" width="13" height="15" fill="#f8f8f7" stroke="#8c8a86"/><path d="M3 5h6M3 7h5M3 9h4M3 11h3M3 13h2" stroke="#9a9894" stroke-width="1"/><path d="M4.500 13.500l8.200-9.500l2.300 2l-8.200 9.500z" fill="#3c3c3c"/><path d="M12.700 4l1.300-1.500l2.300 2l-1.300 1.500z" fill="#e58ad0"/><path d="M4.500 13.500l-1 3l3.300-1z" fill="#e8d86a"/></svg>
  <span class="t" style="left:29.500px;top:2px">мой-станок_4x.hal (~/linu...</span></div>
 <div class="task" style="left:719px;width:226px;background:linear-gradient(#d3d1ce,#cbc9c6 50%,#d2d0cd);box-shadow:inset 0 1px 2px rgba(0,0,0,.18)">
  <svg class="a" style="left:7px;top:3px" width="17" height="15" viewBox="0 0 17 15"><rect x=".5" y="2.500" width="16" height="12" rx="1.500" fill="#dcdcda" stroke="#777"/><rect x="2" y=".8" width="4" height="2" fill="#999"/><circle cx="9" cy="8.500" r="4" fill="#f4f4f4" stroke="#666"/><circle cx="9" cy="8.500" r="1.800" fill="#555"/></svg>
  <span class="t" style="left:31px;top:3px;letter-spacing:-.15px">Take Screenshot</span></div>
 <!-- workspace switcher -->
 <div class="a" style="left:1194px;top:1px;width:145px;height:22px;border-radius:4px;background:#aaa6a2;overflow:hidden">
  <div class="a" style="left:0;top:0;width:36px;height:22px;background:#4b74b1"></div>
  <div class="a" style="left:4px;top:2px;width:17px;height:19px;background:#86a9da;border:1px solid #fff"></div>
  <div class="a" style="left:20px;top:2px;width:15px;height:15px;background:#86a9da;border:1px solid #fff"></div>
  <div class="a" style="left:36px;top:0;width:1px;height:22px;background:#fff"></div>
  <div class="a" style="left:72px;top:0;width:1px;height:22px;background:#fff"></div>
  <div class="a" style="left:108px;top:0;width:1px;height:22px;background:#fff"></div>
 </div>
 <!-- trash -->
 <svg class="a" style="left:1343px;top:0" width="22" height="23" viewBox="0 0 22 23"><defs><linearGradient id="tr" x1="0" y1="0" x2="1" y2="0"><stop offset="0" stop-color="#aeb2ae"/><stop offset=".3" stop-color="#d9dbd8"/><stop offset=".7" stop-color="#cfd1ce"/><stop offset="1" stop-color="#a9adaa"/></linearGradient></defs><path d="M1.800 4.500l1.700 16q3 1.600 6.500 1.600t6.500-1.600l1.700-16z" fill="url(#tr)" stroke="#8f9492" stroke-width=".7"/><g fill="#f4f5f3" opacity=".9"><path d="M4 8l3-1.500l2 2.500l-2.500 3z"/><path d="M10 7.500l3.500 1l-1 3.500l-3-1z"/><path d="M5 14l3.500-1.500l2 3l-3 2.500z"/><path d="M11.500 13.500l3.500-1l.5 4l-3 1.500z"/><path d="M7 18.500l4-.5l1 2.500l-4 .5z"/></g><g fill="#8e938f" opacity=".55"><path d="M8.500 9.500l1.500 2l-1.500 2z"/><path d="M13.500 9l1.500 2.500l-2 1z"/><path d="M4.500 12l1.500 1.500l-1 1.500z"/><path d="M10.500 16l1.500-1l.5 2z"/></g><ellipse cx="10" cy="3.800" rx="8.800" ry="2.600" fill="#c9ccc9" stroke="#8b908e" stroke-width=".9"/><ellipse cx="10" cy="3.900" rx="6" ry="1.300" fill="#6f7472" opacity=".7"/><path d="M1.300 4.300q8.700 4.500 17.400 0" fill="none" stroke="#7d8280" stroke-width=".8"/><path d="M14.800 21.500q-.3-2.500 2-3q.8-1.800 2.500-.8q1.800 1 1.500 3.500z" fill="#e6e7e4" stroke="#6e706c" stroke-width=".8"/></svg>
</div>
</body></html>
